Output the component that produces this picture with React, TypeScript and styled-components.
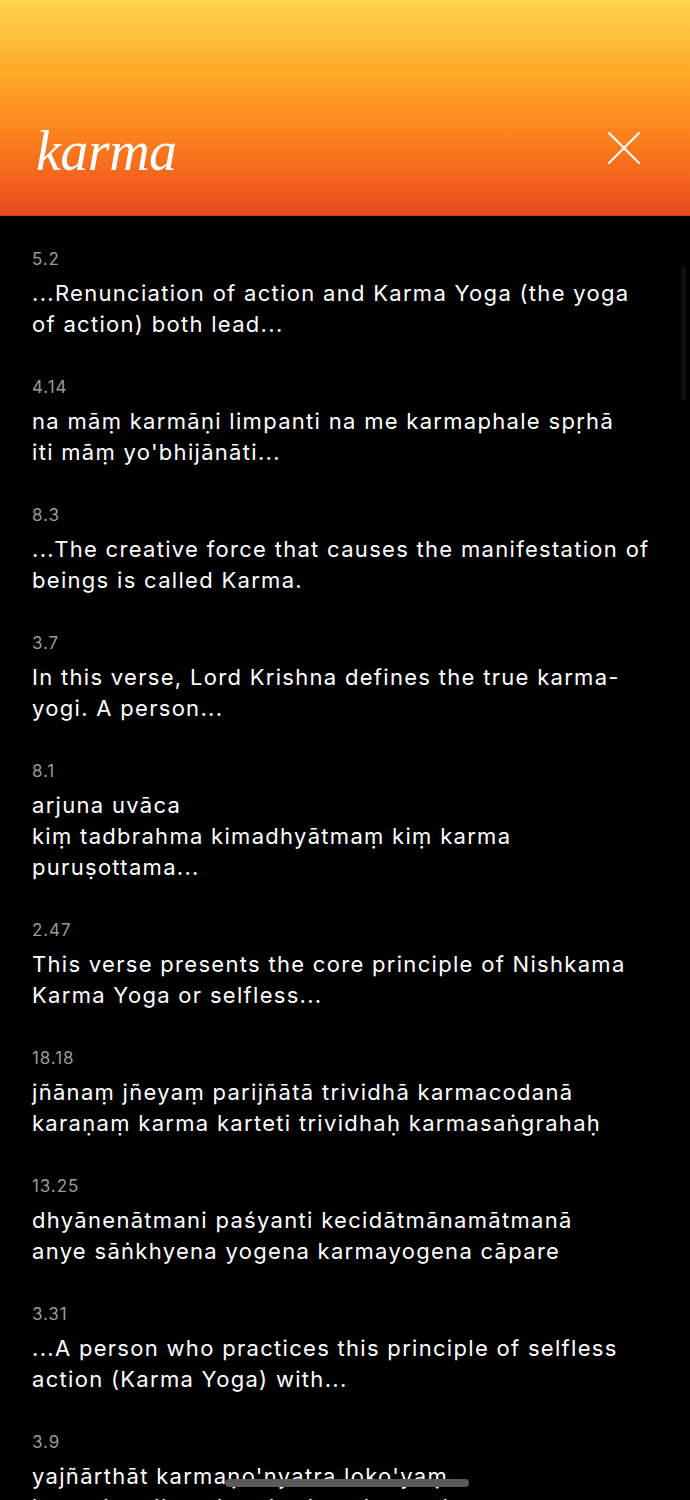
import { createGlobalStyle } from "styled-components";
import styled from "styled-components";

const GlobalStyle = createGlobalStyle`
  html, body {
    margin: 0;
    padding: 0;
    background: #000;
  }
  body {
    font-family: Inter, "Noto Sans", sans-serif;
    -webkit-font-smoothing: antialiased;
  }
`;

const Page = styled.div`
  width: 690px;
  min-height: 1500px;
  background: #000;
  position: relative;
  overflow: hidden;
`;

const Header = styled.header`
  height: 216px;
  box-sizing: border-box;
  padding: 0 49px 36px 36px;
  display: flex;
  align-items: flex-end;
  justify-content: space-between;
  background: linear-gradient(180deg, #ffd54c 0%, #ffa423 38%, #fb7a1c 68%, #ea4a1f 100%);
  border-bottom: 1px solid #c9401c;
`;

const Title = styled.h1`
  margin: 0;
  font-family: "Liberation Serif", "DejaVu Serif", serif;
  font-style: italic;
  font-weight: 400;
  font-size: 56px;
  line-height: 56px;
  color: #fff;
  letter-spacing: -0.5px;
`;

const CloseButton = styled.button`
  border: 0;
  background: none;
  padding: 0;
  margin-bottom: 14px;
  width: 34px;
  height: 34px;
  display: flex;
  align-items: center;
  justify-content: center;
  cursor: pointer;
`;

const List = styled.main`
  padding: 32px 16px 0 32px;
  display: flex;
  flex-direction: column;
  gap: 36px;
`;

const Item = styled.article`
  display: flex;
  flex-direction: column;
  gap: 8px;
`;

const Ref = styled.div`
  font-size: 17px;
  line-height: 22px;
  color: #9a9a9a;
  letter-spacing: 0.9px;
`;

const Snippet = styled.p`
  margin: 0;
  font-size: 22px;
  line-height: 31px;
  color: #fff;
  white-space: pre-line;
  letter-spacing: 1.3px;
`;

const ScrollThumb = styled.div`
  position: absolute;
  right: 4px;
  top: 266px;
  width: 5px;
  height: 134px;
  border-radius: 3px;
  background: #101010;
`;

const HomeIndicator = styled.div`
  position: fixed;
  left: 225px;
  top: 1479px;
  width: 244px;
  height: 8px;
  border-radius: 4px;
  background: #5a5a5a;
`;

const results = [
  { ref: "5.2", text: "...Renunciation of action and Karma Yoga (the yoga\nof action) both lead..." },
  { ref: "4.14", text: "na māṃ karmāṇi limpanti na me karmaphale spṛhā\niti māṃ yo'bhijānāti..." },
  { ref: "8.3", text: "...The creative force that causes the manifestation of\nbeings is called Karma." },
  { ref: "3.7", text: "In this verse, Lord Krishna defines the true karma-\nyogi. A person..." },
  { ref: "8.1", text: "arjuna uvāca\nkiṃ tadbrahma kimadhyātmaṃ kiṃ karma\npuruṣottama..." },
  { ref: "2.47", text: "This verse presents the core principle of Nishkama\nKarma Yoga or selfless..." },
  { ref: "18.18", text: "jñānaṃ jñeyaṃ parijñātā trividhā karmacodanā\nkaraṇaṃ karma karteti trividhaḥ karmasaṅgrahaḥ" },
  { ref: "13.25", text: "dhyānenātmani paśyanti kecidātmānamātmanā\nanye sāṅkhyena yogena karmayogena cāpare" },
  { ref: "3.31", text: "...A person who practices this principle of selfless\naction (Karma Yoga) with..." },
  { ref: "3.9", text: "yajñārthāt karmaṇo'nyatra loko'yaṃ\nkarmabandhanaḥ tadarthaṃ karma kaunteya" },
];

export default function App() {
  return (
    <Page>
      <GlobalStyle />
      <Header>
        <Title>karma</Title>
        <CloseButton aria-label="Close">
          <svg width="34" height="34" viewBox="0 0 34 34" fill="none">
            <path d="M2 2L32 32M32 2L2 32" stroke="#fff" strokeWidth="2.2" strokeLinecap="round" />
          </svg>
        </CloseButton>
      </Header>
      <List>
        {results.map((r) => (
          <Item key={r.ref}>
            <Ref>{r.ref}</Ref>
            <Snippet>{r.text}</Snippet>
          </Item>
        ))}
      </List>
      <ScrollThumb />
      <HomeIndicator />
    </Page>
  );
}
